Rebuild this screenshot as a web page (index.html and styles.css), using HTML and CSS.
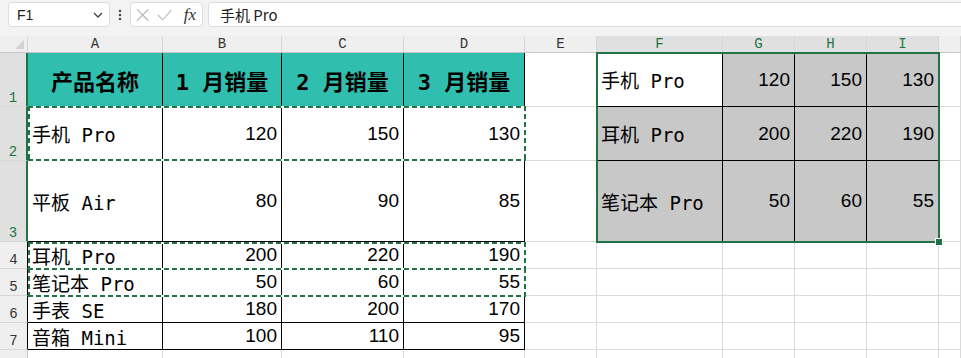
FILE: index.html
```html
<!DOCTYPE html>
<html lang="zh-CN">
<head>
    <meta charset="UTF-8">
    <meta name="viewport" content="width=device-width, initial-scale=1.0">
    <title>销量表</title>
    <link rel="stylesheet" href="styles.css">
</head>
<body>

    <!-- Formula bar -->
    <div class="formula-bar">
        <div class="name-box">
            <span>F1</span>
            <svg width="10" height="6" viewBox="0 0 10 6"><path d="M1 1l4 4 4-4" fill="none" stroke="#444" stroke-width="1.3"/></svg>
        </div>
        <div class="grip">
            <svg width="4" height="12" viewBox="0 0 4 12"><circle cx="2" cy="2" r="1.2" fill="#444"/><circle cx="2" cy="6" r="1.2" fill="#444"/><circle cx="2" cy="10" r="1.2" fill="#444"/></svg>
        </div>
        <div class="fx-box">
            <svg width="14" height="14" viewBox="0 0 14 14"><path d="M1 1l12 12M13 1L1 13" stroke="#b9b9b9" stroke-width="1.2" fill="none"/></svg>
            <svg width="16" height="14" viewBox="0 0 16 14"><path d="M1 7l5 5 9-10" stroke="#b9b9b9" stroke-width="1.2" fill="none"/></svg>
            <span class="fx">fx</span>
        </div>
        <div class="formula-input">手机 Pro</div>
    </div>

    <!-- Sheet -->
    <div class="sheet-wrap">
        <div class="sheet">
            <!-- column headers -->
            <div class="ch corner"></div>
            <div class="ch">A</div>
            <div class="ch">B</div>
            <div class="ch">C</div>
            <div class="ch">D</div>
            <div class="ch">E</div>
            <div class="ch on">F</div>
            <div class="ch on">G</div>
            <div class="ch on">H</div>
            <div class="ch on">I</div>
            <div class="ch"></div>

            <!-- row 1 -->
            <div class="rh on">1</div>
            <div class="cell t hd">产品名称</div>
            <div class="cell t hd">1 月销量</div>
            <div class="cell t hd">2 月销量</div>
            <div class="cell t hd">3 月销量</div>
            <div class="cell"></div>
            <div class="cell a">手机 Pro</div>
            <div class="cell s n">120</div>
            <div class="cell s n">150</div>
            <div class="cell s n">130</div>
            <div class="cell"></div>

            <!-- row 2 -->
            <div class="rh on">2</div>
            <div class="cell t">手机 Pro</div>
            <div class="cell t n">120</div>
            <div class="cell t n">150</div>
            <div class="cell t n">130</div>
            <div class="cell"></div>
            <div class="cell s">耳机 Pro</div>
            <div class="cell s n">200</div>
            <div class="cell s n">220</div>
            <div class="cell s n">190</div>
            <div class="cell"></div>

            <!-- row 3 -->
            <div class="rh on">3</div>
            <div class="cell t">平板 Air</div>
            <div class="cell t n">80</div>
            <div class="cell t n">90</div>
            <div class="cell t n">85</div>
            <div class="cell"></div>
            <div class="cell s">笔记本 Pro</div>
            <div class="cell s n">50</div>
            <div class="cell s n">60</div>
            <div class="cell s n">55</div>
            <div class="cell"></div>

            <!-- row 4 -->
            <div class="rh dark">4</div>
            <div class="cell t">耳机 Pro</div>
            <div class="cell t n">200</div>
            <div class="cell t n">220</div>
            <div class="cell t n">190</div>
            <div class="cell"></div>
            <div class="cell"></div>
            <div class="cell"></div>
            <div class="cell"></div>
            <div class="cell"></div>
            <div class="cell"></div>

            <!-- row 5 -->
            <div class="rh dark">5</div>
            <div class="cell t">笔记本 Pro</div>
            <div class="cell t n">50</div>
            <div class="cell t n">60</div>
            <div class="cell t n">55</div>
            <div class="cell"></div>
            <div class="cell"></div>
            <div class="cell"></div>
            <div class="cell"></div>
            <div class="cell"></div>
            <div class="cell"></div>

            <!-- row 6 -->
            <div class="rh dark">6</div>
            <div class="cell t">手表 SE</div>
            <div class="cell t n">180</div>
            <div class="cell t n">200</div>
            <div class="cell t n">170</div>
            <div class="cell"></div>
            <div class="cell"></div>
            <div class="cell"></div>
            <div class="cell"></div>
            <div class="cell"></div>
            <div class="cell"></div>

            <!-- row 7 -->
            <div class="rh dark">7</div>
            <div class="cell t">音箱 Mini</div>
            <div class="cell t n">100</div>
            <div class="cell t n">110</div>
            <div class="cell t n">95</div>
            <div class="cell"></div>
            <div class="cell"></div>
            <div class="cell"></div>
            <div class="cell"></div>
            <div class="cell"></div>
            <div class="cell"></div>

            <!-- row 8 (only its top edge is in view) -->
            <div class="rh"></div>
            <div class="cell"></div>
            <div class="cell"></div>
            <div class="cell"></div>
            <div class="cell"></div>
            <div class="cell"></div>
            <div class="cell"></div>
            <div class="cell"></div>
            <div class="cell"></div>
            <div class="cell"></div>
            <div class="cell"></div>
        </div>

        <!-- copy marquee (A2:D2, A4:D4, A5:D5) -->
        <div class="marquee m1"></div>
        <div class="marquee m2"></div>
        <div class="marquee m3"></div>

        <!-- selection F1:I3 -->
        <div class="selection"><span class="handle"></span></div>
    </div>

</body>
</html>
```

FILE: styles.css
```css
body {
    margin: 0;
    width: 961px;
    height: 358px;
    overflow: hidden;
    background: #f3f3f3;
    font-family: "Liberation Sans", Arial, sans-serif;
}

/* formula bar */
.formula-bar {
    display: flex;
    align-items: center;
    height: 29px;
    padding-left: 8px;
    margin-bottom: 7px;
}
.name-box, .fx-box, .formula-input {
    box-sizing: border-box;
    height: 25px;
    background: white;
    border: 1px solid #dedede;
    border-radius: 4px;
    display: flex;
    align-items: center;
}
.name-box {
    width: 102px;
    justify-content: space-between;
    padding: 0 6px 0 8px;
    font-size: 14px;
    color: #222;
}
.grip {
    width: 20px;
    display: flex;
    justify-content: center;
}
.fx-box {
    width: 73px;
    padding: 0 6px 0 5px;
    gap: 8px;
}
.fx {
    font-family: "Liberation Serif", serif;
    font-style: italic;
    font-size: 17px;
    color: #333;
    margin-left: 3px;
}
.formula-input {
    flex: 1;
    margin-left: 5px;
    margin-right: -6px;
    padding-left: 11px;
    font-family: "Noto Sans CJK SC", sans-serif;
    font-size: 15px;
    color: #222;
}

/* sheet grid */
.sheet-wrap {
    position: relative;
    background: white;
}
.sheet {
    display: grid;
    grid-template-columns: 28px 135px 119px 122px 121px 72px 126px 72px 72px 72px 1fr;
    grid-template-rows: 17px 54px 54px 81px 27px 27px 27px 27px 27px;
}
.ch, .rh {
    box-sizing: border-box;
    background: #efefef;
    font-family: "Liberation Mono", monospace;
    font-size: 14px;
    color: #333;
    display: flex;
    justify-content: center;
    align-items: flex-end;
}
.ch {
    line-height: 16px;
    border-right: 1px solid #d6d6d6;
    border-bottom: 1px solid #c6c6c6;
}
.ch.on {
    background: #e0e0e0;
    color: #217346;
}
.corner {
    position: relative;
}
.corner::after {
    content: "";
    position: absolute;
    right: 3px;
    bottom: 3px;
    border-left: 9px solid transparent;
    border-bottom: 9px solid #d2d2d2;
}
.rh {
    border-right: 1px solid #c6c6c6;
    border-bottom: 1px solid #d6d6d6;
    padding-bottom: 1px;
    line-height: 14px;
}
.rh.on {
    background: #e0e0e0;
    color: #217346;
    border-right: 2px solid #217346;
}
.rh.dark {
    border-right-color: #000;
}

.cell {
    box-sizing: border-box;
    border-right: 1px solid #dadada;
    border-bottom: 1px solid #dadada;
    display: flex;
    align-items: center;
    padding: 0 4px;
    font-family: "DejaVu Sans Mono", "Noto Sans CJK SC", monospace;
    font-size: 19px;
    color: #000;
    white-space: nowrap;
    overflow: hidden;
}
.cell.n {
    justify-content: flex-end;
    font-family: "Liberation Sans", Arial, sans-serif;
}
.cell.t, .cell.s, .cell.a {
    border-color: #000;
}
.cell.hd {
    background: #30bfae;
    justify-content: center;
    font-weight: bold;
    font-size: 22px;
}
.cell.s {
    background: #c8c8c8;
}
.cell.a {
    background: white;
}

/* copy marquee: green and white dashes */
.marquee {
    position: absolute;
    left: 28px;
    width: 498px;
    background:
        repeating-linear-gradient(90deg, #217346 0 5px, #fff 5px 8px) left top / 100% 2px no-repeat,
        repeating-linear-gradient(90deg, #217346 0 5px, #fff 5px 8px) left bottom / 100% 2px no-repeat,
        repeating-linear-gradient(180deg, #217346 0 5px, #fff 5px 8px) left top / 2px 100% no-repeat,
        repeating-linear-gradient(180deg, #217346 0 5px, #fff 5px 8px) right top / 2px 100% no-repeat;
}
.m1 { top: 70px; height: 55px; }
.m2 { top: 206px; height: 28px; }
.m3 { top: 232px; height: 29px; }

/* selected range */
.selection {
    position: absolute;
    left: 596px;
    top: 16px;
    width: 344px;
    height: 191px;
    box-sizing: border-box;
    border: 2px solid #217346;
}
.handle {
    position: absolute;
    right: -5px;
    bottom: -5px;
    width: 6px;
    height: 6px;
    background: #217346;
    border: 1px solid white;
}
```
